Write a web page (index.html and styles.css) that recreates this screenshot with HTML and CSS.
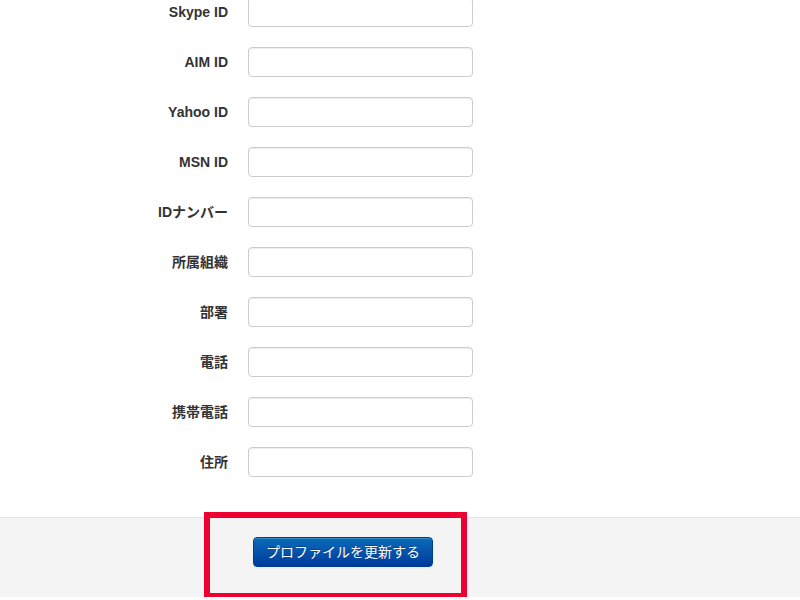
FILE: index.html
```html
<!DOCTYPE html>
<html lang="ja">
<head>
<meta charset="utf-8">
<title>プロファイル</title>
<link rel="stylesheet" href="styles.css">
</head>
<body>
<form class="form">
  <div class="fields">
    <div class="row"><label class="label">Skype ID</label><input class="input" type="text"></div>
    <div class="row"><label class="label">AIM ID</label><input class="input" type="text"></div>
    <div class="row"><label class="label">Yahoo ID</label><input class="input" type="text"></div>
    <div class="row"><label class="label">MSN ID</label><input class="input" type="text"></div>
    <div class="row"><label class="label">IDナンバー</label><input class="input" type="text"></div>
    <div class="row"><label class="label">所属組織</label><input class="input" type="text"></div>
    <div class="row"><label class="label">部署</label><input class="input" type="text"></div>
    <div class="row"><label class="label">電話</label><input class="input" type="text"></div>
    <div class="row"><label class="label">携帯電話</label><input class="input" type="text"></div>
    <div class="row"><label class="label">住所</label><input class="input" type="text"></div>
  </div>
  <div class="actions">
    <button class="btn" type="button">プロファイルを更新する</button>
    <div class="highlight"></div>
  </div>
</form>
</body>
</html>
```
FILE: styles.css
```css
html, body {
  margin: 0;
  padding: 0;
  background: #fff;
  font-family: "Liberation Sans", "Noto Sans CJK JP", sans-serif;
  font-size: 14px;
  color: #333;
}
.form {
  margin: -3px 0 0 0;
}
.fields {
  padding-left: 68px;
  display: flex;
  flex-direction: column;
  gap: 20px;
  padding-bottom: 20px;
}
.row {
  display: grid;
  grid-template-columns: 160px 225px;
  column-gap: 20px;
  align-items: start;
}
.label {
  text-align: right;
  font-weight: bold;
  line-height: 20px;
  padding-top: 5px;
  color: #333;
}
.input {
  box-sizing: border-box;
  width: 225px;
  height: 30px;
  margin: 0;
  padding: 4px 6px;
  border: 1px solid #ccc;
  border-radius: 4px;
  background: #fff;
  box-shadow: inset 0 1px 1px rgba(0,0,0,0.075);
  font-family: inherit;
  font-size: 14px;
}
.actions {
  position: relative;
  margin-top: 20px;
  border-top: 1px solid #e5e5e5;
  background: #f4f4f4;
  padding: 19px 0 30px 253px;
}
.btn {
  box-sizing: border-box;
  width: 180px;
  height: 30px;
  margin: 0;
  display: block;
  border: 1px solid #023c8c;
  border-radius: 4px;
  background: linear-gradient(#0a6cb8, #003a9c);
  color: #fff;
  font-family: inherit;
  font-size: 14px;
  line-height: 20px;
  padding: 4px 0;
  text-shadow: 0 -1px 0 rgba(0,0,0,0.25);
  box-shadow: inset 0 1px 0 rgba(255,255,255,0.2), 0 1px 2px rgba(0,0,0,0.05);
}
.highlight {
  position: absolute;
  left: 204px;
  top: -6px;
  width: 263px;
  height: 87px;
  box-sizing: border-box;
  border: 6px solid #ee0030;
}
```
